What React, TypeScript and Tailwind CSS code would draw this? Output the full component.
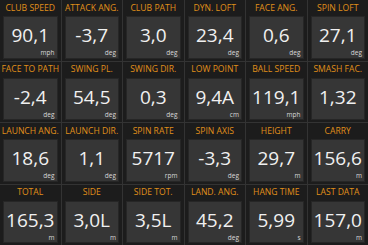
import React from 'react';

type Metric = { label: string; value: string; unit: string };

const metrics: Metric[] = [
  { label: 'CLUB SPEED', value: '90,1', unit: 'mph' },
  { label: 'ATTACK ANG.', value: '-3,7', unit: 'deg' },
  { label: 'CLUB PATH', value: '3,0', unit: 'deg' },
  { label: 'DYN. LOFT', value: '23,4', unit: 'deg' },
  { label: 'FACE ANG.', value: '0,6', unit: 'deg' },
  { label: 'SPIN LOFT', value: '27,1', unit: 'deg' },
  { label: 'FACE TO PATH', value: '-2,4', unit: 'deg' },
  { label: 'SWING PL.', value: '54,5', unit: 'deg' },
  { label: 'SWING DIR.', value: '0,3', unit: 'deg' },
  { label: 'LOW POINT', value: '9,4A', unit: 'cm' },
  { label: 'BALL SPEED', value: '119,1', unit: 'mph' },
  { label: 'SMASH FAC.', value: '1,32', unit: '' },
  { label: 'LAUNCH ANG.', value: '18,6', unit: 'deg' },
  { label: 'LAUNCH DIR.', value: '1,1', unit: 'deg' },
  { label: 'SPIN RATE', value: '5717', unit: 'rpm' },
  { label: 'SPIN AXIS', value: '-3,3', unit: 'deg' },
  { label: 'HEIGHT', value: '29,7', unit: 'm' },
  { label: 'CARRY', value: '156,6', unit: 'm' },
  { label: 'TOTAL', value: '165,3', unit: 'm' },
  { label: 'SIDE', value: '3,0L', unit: 'm' },
  { label: 'SIDE TOT.', value: '3,5L', unit: 'm' },
  { label: 'LAND. ANG.', value: '45,2', unit: 'deg' },
  { label: 'HANG TIME', value: '5,99', unit: 's' },
  { label: 'LAST DATA', value: '157,0', unit: 'm' },
];

const Tile: React.FC<{ m: Metric }> = ({ m }) => (
  <div className="flex flex-col bg-[#1c1c1c] px-[3px] pb-[2px]">
    <div className="h-[16px] flex items-center justify-center text-[8.6px] leading-none text-[#e0901a] whitespace-nowrap">
      {m.label}
    </div>
    <div className="relative flex-1 flex items-center justify-center bg-[#363636] border border-[#262626]">
      <span className="text-[19px] leading-none text-[#f0f0f0] -mt-[3px]">{m.value}</span>
      <span className="absolute right-[2px] bottom-[1px] text-[6.5px] leading-none text-[#d8d8d8]">{m.unit}</span>
    </div>
  </div>
);

const App: React.FC = () => {
  return (
    <div
      className="w-[368px] h-[245px] bg-[#333333] grid grid-cols-6 grid-rows-4 gap-[1px] overflow-hidden"
      style={{ fontFamily: '"Open Sans", "Noto Sans", sans-serif' }}
    >
      {metrics.map((m) => (
        <Tile key={m.label} m={m} />
      ))}
    </div>
  );
};

export default App;
